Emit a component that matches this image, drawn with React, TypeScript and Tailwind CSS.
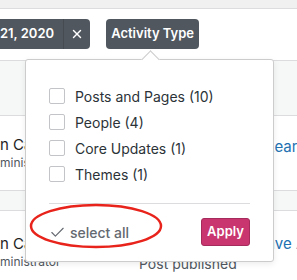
import { Check, X } from "lucide-react"

const activityTypes = [
  { label: "Posts and Pages", count: 10 },
  { label: "People", count: 4 },
  { label: "Core Updates", count: 1 },
  { label: "Themes", count: 1 },
]

function Checkbox() {
  return <span className="block w-[16px] h-[16px] rounded-[2px] border border-[#c3c4c7] bg-white shrink-0" />
}

export default function App() {
  return (
    <div className="relative w-[297px] h-[280px] overflow-hidden bg-white font-['Inter',sans-serif] text-[#1e1e1e]">
      <div className="h-[9px] bg-[#f0f0f1] border-b border-[#dcdcde]" />

      {/* filter chips */}
      <div className="h-[51px] flex items-start pt-[10px] gap-[16px]">
        <div className="h-[30px] flex items-center bg-[#50575e] text-white text-[13px] font-semibold rounded-r-[4px]">
          <span className="pr-[9px]">21, 2020</span>
          <span className="h-full flex items-center px-[6px] border-l border-[#454b51]">
            <X size={14} strokeWidth={2.5} />
          </span>
        </div>
        <div className="h-[30px] w-[93px] flex items-center justify-center bg-[#50575e] text-white text-[13px] font-semibold rounded-[4px]">
          Activity Type
        </div>
      </div>

      {/* table behind */}
      <div className="h-[56px] bg-[#f6f7f7] border-y border-[#dcdcde]" />
      <div className="h-[74px] w-[360px] flex text-[14px] whitespace-nowrap">
        <div className="w-[266px] pt-[20px] leading-[18px]">
          <div className="text-[15px]">n Campbell</div>
          <div className="text-[12px] text-[#50575e]">ministrator</div>
        </div>
        <div className="pt-[20px] text-[15px] text-[#2271b1]">Learn more</div>
      </div>
      <div className="h-[21px] bg-[#f6f7f7] border-y border-[#dcdcde]" />
      <div className="h-[70px] w-[380px] flex text-[14px] whitespace-nowrap">
        <div className="w-[139px] pt-[24px] leading-[18px]">
          <div className="text-[15px]">n Campbell</div>
          <div className="text-[12px] text-[#50575e]">ministrator</div>
        </div>
        <div className="w-[118px] pt-[42px] text-[14px] text-[#50575e]">Post published</div>
        <div className="pt-[22px] text-[15px] text-[#2271b1]">Save Activity</div>
      </div>

      {/* popover */}
      <div className="absolute left-[25px] top-[59px] w-[249px] h-[203px] bg-white border border-[#cccccc] rounded-[3px] shadow-[0_2px_6px_rgba(0,0,0,0.08)] px-[23px]">
        <span className="absolute left-[118px] -top-[7px] w-[13px] h-[13px] bg-white border-t border-l border-[#cccccc] rotate-45" />
        <div className="pt-[28px] flex flex-col gap-[10px]">
          {activityTypes.map((type) => (
            <label key={type.label} className="flex items-center gap-[10px] h-[16px] text-[14px] text-[#2c3338]">
              <Checkbox />
              <span>{type.label} ({type.count})</span>
            </label>
          ))}
        </div>
        <div className="mt-[21px] border-t border-[#dcdcde]" />
        <div className="mt-[14px] flex items-center justify-between">
          <div className="flex items-center gap-[4px] text-[14px] font-medium text-[#646970]">
            <Check size={17} strokeWidth={1.6} />
            <span>select all</span>
          </div>
          <button className="h-[28px] w-[49px] rounded-[3px] bg-[#c9356e] border border-[#a42b5b] text-white text-[13px] font-semibold">
            Apply
          </button>
        </div>
      </div>

      {/* annotation */}
      <svg className="absolute left-[28px] top-[202px]" width="138" height="50" viewBox="0 0 138 50">
        <ellipse cx="68" cy="24" rx="65" ry="21" fill="none" stroke="#e8231b" strokeWidth="2.5" />
      </svg>
    </div>
  )
}
